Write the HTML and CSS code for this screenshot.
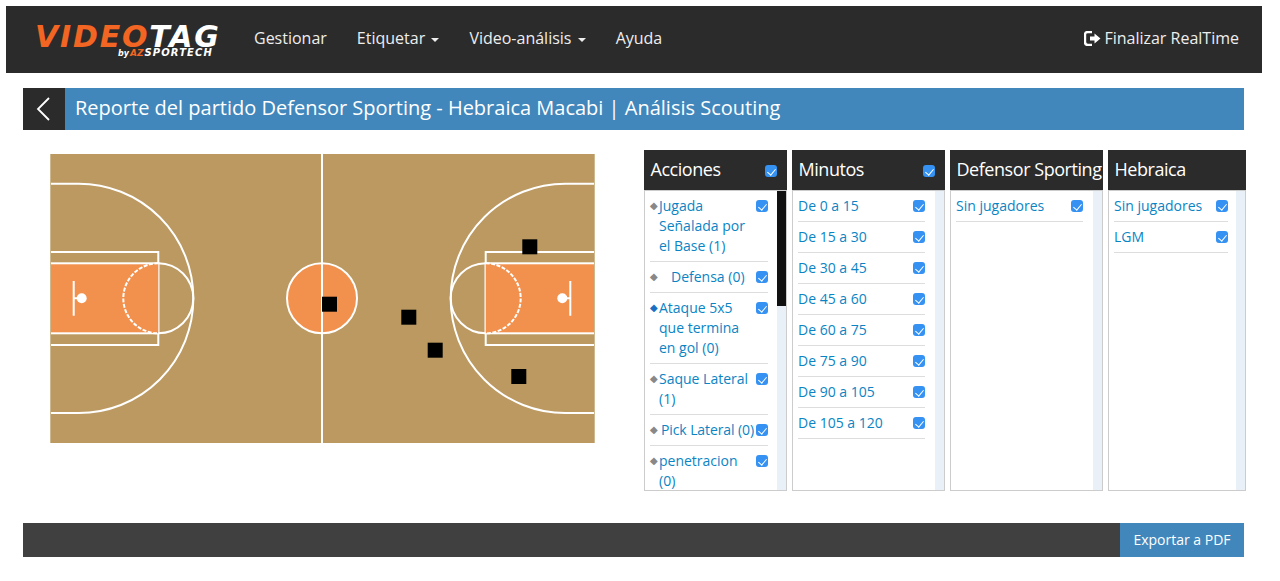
FILE: index.html
```html
<!DOCTYPE html>
<html lang="es">
<head>
    <meta charset="UTF-8">
    <title>Reporte del partido</title>
    <link rel="stylesheet" href="styles.css">
</head>
<body>
<div class="window">
    <nav class="navbar">
        <a class="logo">
            <span class="logo-main"><span class="orange">VIDEO</span>TAG</span>
            <span class="logo-sub"><span class="by">by</span><span class="orange">AZ</span><span class="sport">SPORTECH</span></span>
        </a>
        <ul class="menu">
            <li>Gestionar</li>
            <li>Etiquetar <span class="caret"></span></li>
            <li>Video-análisis <span class="caret"></span></li>
            <li>Ayuda</li>
        </ul>
        <a class="logout">
            <svg width="17" height="15" viewBox="0 0 17 15">
                <path d="M8 1H4Q1 1 1 4V11Q1 14 4 14H8" fill="none" stroke="#fff" stroke-width="2.4"/>
                <path d="M6 5.5H10.500V2.500L16.500 7.500L10.500 12.500V9.500H6Z" fill="#fff"/>
            </svg>
            Finalizar RealTime
        </a>
    </nav>

    <header class="title-bar">
        <a class="back">
            <svg width="14" height="24" viewBox="0 0 14 24">
                <polyline points="13,1 2,12 13,23" fill="none" stroke="#fff" stroke-width="1.800"/>
            </svg>
        </a>
        <h1>Reporte del partido Defensor Sporting - Hebraica Macabi | Análisis Scouting</h1>
    </header>

    <section class="content">
        <svg class="court" width="545" height="289" viewBox="0 0 545 289">
            <defs>
                <g id="half">
                    <rect x="-2" y="109.300" width="110.300" height="70" fill="#f2914d"/>
                    <rect x="-2" y="98" width="110.300" height="93" class="line"/>
                    <rect x="-2" y="109.300" width="110.300" height="70" class="line"/>
                    <path d="M108.300 109.300A35 35 0 0 0 108.300 179.300Z" fill="#f2914d"/>
                    <path d="M108.300 109.300A35 35 0 0 1 108.300 179.300" class="line"/>
                    <path d="M108.300 109.300A35 35 0 0 0 108.300 179.300" class="line" stroke-dasharray="4 1.500"/>
                    <path d="M-2 29.700H28.700A114.600 114.600 0 0 1 28.700 259H-2" class="line"/>
                    <path d="M23.700 127V161.700M23.700 144.300H31" class="line"/>
                    <circle cx="31.700" cy="144.300" r="5" fill="#fff"/>
                </g>
            </defs>
            <rect width="545" height="289" fill="#bb9960"/>
            <circle cx="272" cy="144.300" r="35" fill="#f2914d" class="line-only"/>
            <path d="M272 0V289" class="line"/>
            <use href="#half"/>
            <use href="#half" transform="translate(544) scale(-1 1)"/>
            <path d="M0.500 0V289M544.500 0V289" class="edge"/>
            <rect x="472.300" y="85.300" width="15" height="15"/>
            <rect x="351.300" y="155.700" width="15" height="15"/>
            <rect x="377.700" y="188.700" width="15" height="15"/>
            <rect x="461.300" y="215" width="15" height="15"/>
            <rect x="272" y="142.700" width="15" height="15"/>
        </svg>

        <div class="filters">
            <div class="filter col-acciones">
                <div class="filter-head">Acciones <input type="checkbox" checked></div>
                <div class="filter-body">
                    <ul>
                        <li><i>◆</i><span>Jugada Señalada por el Base (1)</span><input type="checkbox" checked></li>
                        <li><i>◆</i><span class="indent-lg">Defensa (0)</span><input type="checkbox" checked></li>
                        <li><i class="blue">◆</i><span>Ataque 5x5 que termina en gol (0)</span><input type="checkbox" checked></li>
                        <li><i>◆</i><span>Saque Lateral (1)</span><input type="checkbox" checked></li>
                        <li><i>◆</i><span class="indent-sm">Pick Lateral (0)</span><input type="checkbox" checked></li>
                        <li><i>◆</i><span>penetracion (0)</span><input type="checkbox" checked></li>
                    </ul>
                    <div class="track"><div class="thumb"></div></div>
                </div>
            </div>

            <div class="filter col-minutos">
                <div class="filter-head">Minutos <input type="checkbox" checked></div>
                <div class="filter-body">
                    <ul>
                        <li><span>De 0 a 15</span><input type="checkbox" checked></li>
                        <li><span>De 15 a 30</span><input type="checkbox" checked></li>
                        <li><span>De 30 a 45</span><input type="checkbox" checked></li>
                        <li><span>De 45 a 60</span><input type="checkbox" checked></li>
                        <li><span>De 60 a 75</span><input type="checkbox" checked></li>
                        <li><span>De 75 a 90</span><input type="checkbox" checked></li>
                        <li><span>De 90 a 105</span><input type="checkbox" checked></li>
                        <li><span>De 105 a 120</span><input type="checkbox" checked></li>
                    </ul>
                    <div class="track"></div>
                </div>
            </div>

            <div class="filter col-defensor">
                <div class="filter-head">Defensor Sporting</div>
                <div class="filter-body">
                    <ul>
                        <li><span>Sin jugadores</span><input type="checkbox" checked></li>
                    </ul>
                    <div class="track"></div>
                </div>
            </div>

            <div class="filter col-hebraica">
                <div class="filter-head">Hebraica</div>
                <div class="filter-body">
                    <ul>
                        <li><span>Sin jugadores</span><input type="checkbox" checked></li>
                        <li><span>LGM</span><input type="checkbox" checked></li>
                    </ul>
                    <div class="track"></div>
                </div>
            </div>
        </div>
    </section>

    <footer class="footer-bar">
        <a class="export">Exportar a PDF</a>
    </footer>
</div>
</body>
</html>
```

FILE: styles.css
```css
* {
    box-sizing: border-box;
}
body {
    margin: 6px 18px 6px 6px;
    font-family: "Open Sans", sans-serif;
    background-color: #fff;
    color: #333;
}
.window {
    position: relative;
    width: 1256px;
    height: 561px;
    background-color: #fff;
}
/* soft edge under and right of the window */
.window::before {
    content: "";
    position: absolute;
    left: 100%;
    top: 0;
    width: 5px;
    height: 100%;
    background: linear-gradient(to right, #cfcfcf, #fff);
}
.window::after {
    content: "";
    position: absolute;
    left: 0;
    top: 100%;
    width: 100%;
    height: 7px;
    background: linear-gradient(#c4c4c4, #fff);
}

/* navbar */
.navbar {
    display: flex;
    align-items: center;
    height: 67px;
    padding: 0 23px 3px 29px;
    background-color: #2b2b2b;
    color: #eee;
    font-size: 16px;
}
.logo {
    display: flex;
    flex-direction: column;
    width: 189px;
    margin-top: 7px;
    color: #fff;
}
.orange {
    color: #f26522;
}
.logo-main {
    font-family: "DejaVu Sans", sans-serif;
    font-weight: bold;
    font-style: italic;
    font-size: 30px;
    line-height: 23px;
    letter-spacing: 1.8px;
    white-space: nowrap;
}
.logo-sub {
    padding-left: 83px;
    font-family: "DejaVu Sans", sans-serif;
    font-weight: bold;
    font-style: italic;
    font-size: 9px;
    line-height: 10px;
    white-space: nowrap;
}
.by {
    margin-right: 1px;
    font-size: 8px;
}
.sport {
    margin-left: 1px;
    font-size: 10px;
    letter-spacing: 1.1px;
}
.menu {
    display: flex;
    flex: 1;
    margin: 0;
    padding: 0 0 0 15px;
    list-style: none;
}
.menu li {
    padding: 0 15px;
}
.caret {
    display: inline-block;
    margin-left: 2px;
    vertical-align: middle;
    border-top: 4px solid #eee;
    border-left: 4px solid transparent;
    border-right: 4px solid transparent;
}
.logout {
    display: flex;
    align-items: center;
    gap: 3px;
}

/* title */
.title-bar {
    display: flex;
    align-items: center;
    height: 42px;
    margin: 15px 18px 0 17px;
    background-color: #4187bc;
}
.back {
    display: flex;
    align-items: center;
    justify-content: center;
    width: 42px;
    height: 42px;
    padding-right: 2px;
    background-color: #2b2b2b;
}
.title-bar h1 {
    margin: 0 0 4px 10px;
    font-size: 20px;
    font-weight: 400;
    color: #fff;
}

/* court + filters */
.content {
    display: flex;
    justify-content: space-between;
    height: 341px;
    margin: 20px 16px 0 44px;
}
.court {
    display: block;
    margin-top: 4px;
}
.line, .line-only {
    stroke: #fff;
    stroke-width: 2;
}
.line {
    fill: none;
}
.edge {
    stroke: #cdb88f;
    stroke-width: 1;
}
.filters {
    display: flex;
    gap: 5px;
}
.filter {
    display: flex;
    flex-direction: column;
    width: 153px;
}
.col-acciones {
    width: 143px;
}
.col-hebraica {
    width: 138px;
}
.filter-head {
    display: flex;
    align-items: center;
    justify-content: space-between;
    height: 40px;
    padding: 0 10px 2px 6.500px;
    background-color: #2b2b2b;
    color: #fff;
    font-size: 18px;
    letter-spacing: -0.45px;
    white-space: nowrap;
}
.filter-head input {
    margin-top: 6px;
}
.filter-body {
    display: flex;
    flex: 1;
    overflow: hidden;
    border: 1px solid #ccc;
    background-color: #fff;
}
.filter-body ul {
    flex: 1;
    margin: 0;
    padding: 0 10px 0 5px;
    list-style: none;
}
.filter-body li {
    display: flex;
    padding: 5px 0;
    border-bottom: 1px solid #ddd;
    color: #0a84c4;
    font-size: 14px;
    line-height: 20px;
}
.filter-body li span {
    flex: 1;
}
.col-acciones .filter-body ul {
    padding-right: 9px;
}
.col-hebraica .filter-body ul {
    padding-right: 8px;
}
.col-acciones .filter-body li span {
    padding-right: 4px;
}
.col-acciones .filter-body li .indent-lg {
    padding-left: 12px;
}
.col-acciones .filter-body li .indent-sm {
    padding: 0 0 0 2px;
    letter-spacing: -0.1px;
    white-space: nowrap;
}
.filter-body i {
    flex: none;
    width: 9px;
    font-family: "DejaVu Sans", sans-serif;
    font-size: 10px;
    font-style: normal;
    color: #888;
}
.filter-body i.blue {
    color: #1a6fc4;
}
.track {
    flex: none;
    width: 9px;
    background-color: #e9f0f8;
}
.thumb {
    height: 115px;
    background-color: #111;
}

/* checkbox */
input[type="checkbox"] {
    appearance: none;
    position: relative;
    flex: none;
    width: 12px;
    height: 12px;
    margin: 4px 0 0;
    border-radius: 3px;
    background-color: #3592f2;
}
input[type="checkbox"]::after {
    content: "";
    position: absolute;
    left: 4px;
    top: 2px;
    width: 4px;
    height: 7px;
    border: solid #fff;
    border-width: 0 1.5px 1.5px 0;
    transform: rotate(40deg);
}

/* footer */
.footer-bar {
    display: flex;
    justify-content: flex-end;
    height: 34px;
    margin: 32px 18px 0 17px;
    background-color: #404040;
}
.export {
    width: 124px;
    background-color: #4187bc;
    color: #fff;
    font-size: 14px;
    line-height: 34px;
    text-align: center;
}
```
